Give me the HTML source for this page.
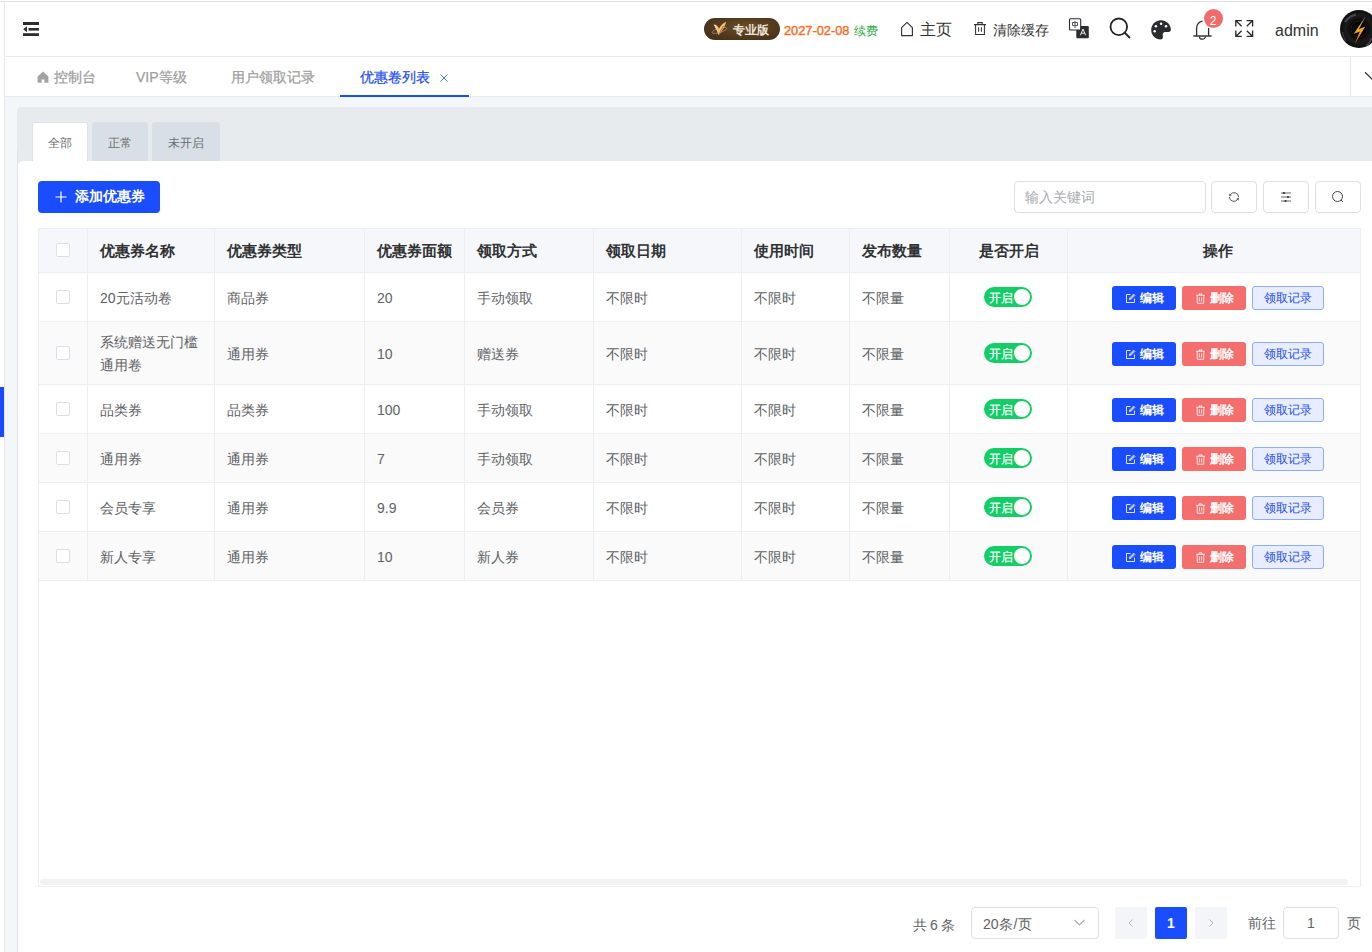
<!DOCTYPE html>
<html><head><meta charset="utf-8">
<style>
*{box-sizing:border-box;margin:0;padding:0}
html,body{width:1372px;height:952px;overflow:hidden;background:#fff;font-family:"Liberation Sans",sans-serif;color:#606266}
.abs{position:absolute}
#topline{left:0;top:1px;width:1372px;height:1px;background:#dfe3df}
#leftline{left:4px;top:2px;width:1px;height:950px;background:#e4e7ef}
#sidebar-ind{left:0;top:387px;width:4px;height:50px;background:#1a49ff}
#hdr-bottom{left:5px;top:56px;width:1367px;height:1px;background:#e6e9f0}
#tab-bottom{left:5px;top:96px;width:1367px;height:1px;background:#e6e9f0}
#content-bg{left:5px;top:97px;width:1367px;height:855px;background:#f4f7fa}
.t{position:absolute;white-space:nowrap;line-height:1}

.th{font-size:15px;font-weight:bold;color:#303133}
.td{font-size:14px;color:#606266}
.sw{width:48px;height:20px;border-radius:10px;background:#13ce66}
.sw span{position:absolute;left:4.5px;top:4.5px;font-size:12px;line-height:1;color:#fff;white-space:nowrap;-webkit-text-stroke:0.2px #fff}
.sw i{position:absolute;left:30px;top:2px;width:16px;height:16px;border-radius:50%;background:#fff}
.btn{height:24px;border-radius:3px;display:flex;align-items:center;justify-content:center;white-space:nowrap}
.btn b{font-size:12px;line-height:1;color:#fff;font-weight:bold;margin-left:4px;position:relative;top:-0.5px}
.be{background:#1a4dff}
.bd{background:#f46e6e}
.br{background:#e8eeff;border:1px solid #8faaff}
.br span{font-size:12px;line-height:1;color:#1f4cf2;font-weight:500;position:relative;top:-0.5px}
</style></head><body>
<div class="abs" id="topline"></div>
<div class="abs" id="leftline"></div>
<div class="abs" id="sidebar-ind"></div>
<div class="abs" id="hdr-bottom"></div>
<div class="abs" id="tab-bottom"></div>
<div class="abs" id="content-bg"></div>

<!-- header -->
<svg class="abs" style="left:23px;top:22px" width="17" height="15" viewBox="0 0 17 15">
<rect x="0" y="0" width="16" height="3" fill="#2c2d30"/>
<rect x="5.5" y="6" width="10.5" height="2.6" fill="#2c2d30"/>
<path d="M0.2 7.3 L4 4.3 L4 10.3 Z" fill="#2c2d30"/>
<rect x="0" y="11.2" width="16" height="2.8" fill="#2c2d30"/>
</svg>

<div class="abs" style="left:704px;top:18px;width:76px;height:22px;border-radius:11px;background:radial-gradient(ellipse at 55% 40%,#6a4c28 0%,#4f381d 60%,#3f2c16 100%)"></div>
<svg class="abs" style="left:711px;top:21px" width="17" height="16" viewBox="0 0 17 16">
<defs><linearGradient id="vlg" x1="0" y1="0" x2="1" y2="1"><stop offset="0" stop-color="#fff6e4"/><stop offset="0.45" stop-color="#f3c477"/><stop offset="1" stop-color="#e8a050"/></linearGradient></defs>
<ellipse cx="8.4" cy="9.4" rx="7.6" ry="2.2" transform="rotate(-17 8.4 9.4)" fill="none" stroke="#a39483" stroke-width="0.7"/>
<path d="M2.6 3.6 Q6.6 3.6 7.9 8.2 Q10.2 3 15.2 0.8 Q13.6 7.5 7.6 14.2 Q5.2 7.6 2.6 3.6 Z" fill="url(#vlg)"/>
<path d="M12.5 5 Q10 9 7.9 13.8" stroke="#b8452a" stroke-width="0.9" fill="none" opacity="0.8"/>
</svg>
<div class="t" style="left:732.5px;top:23.5px;font-size:12px;font-weight:bold;color:#eee6d8">专业版</div>
<div class="t" style="left:784px;top:25px;font-size:12.8px;color:#fa6a22;-webkit-text-stroke:0.4px #fa6a22">2027-02-08</div>
<div class="t" style="left:854px;top:24.5px;font-size:12px;color:#2aa745">续费</div>

<svg class="abs" style="left:900px;top:21px" width="15" height="16" viewBox="0 0 15 16">
<path d="M1.6 14.6 V6.6 L7 1.4 L12.4 6.6 V14.6 Z" fill="none" stroke="#333" stroke-width="1.15" stroke-linejoin="round"/>
</svg>
<div class="t" style="left:919.5px;top:22px;font-size:16px;color:#333">主页</div>
<svg class="abs" style="left:973px;top:21px" width="14" height="15" viewBox="0 0 14 15">
<path d="M1 3.6 H13 M4.8 3.4 V1.6 H9.2 V3.4 M2.6 3.8 V13.4 H11.4 V3.8 M5.6 6.2 V10.8 M8.4 6.2 V10.8" fill="none" stroke="#333" stroke-width="1.05"/>
</svg>
<div class="t" style="left:992.5px;top:23px;font-size:14px;color:#333">清除缓存</div>

<svg class="abs" style="left:1068px;top:17px" width="23" height="23" viewBox="0 0 23 23">
<rect x="8.3" y="9.1" width="12.5" height="12.2" rx="1" fill="#2b2c30"/>
<path d="M12.4 18.2 L15 12 L17.6 18.2 M13.4 16.2 H16.6" fill="none" stroke="#fff" stroke-width="0.9"/>
<rect x="1.5" y="1.8" width="11.2" height="11.2" rx="1" fill="#fff" stroke="#2b2c30" stroke-width="1.1"/>
<path d="M4.5 5.5 H9.5 V8.6 H4.5 Z M7 4 V11" fill="none" stroke="#444" stroke-width="0.9"/>
</svg>

<svg class="abs" style="left:1108px;top:16px" width="24" height="24" viewBox="0 0 24 24">
<circle cx="10.8" cy="10.8" r="8.3" fill="none" stroke="#222" stroke-width="1.8"/>
<path d="M17 17 L21.5 21.5" stroke="#222" stroke-width="1.8" stroke-linecap="round"/>
</svg>

<svg class="abs" style="left:1150px;top:19px" width="22" height="22" viewBox="0 0 22 22">
<path d="M11 1.2 C5.5 1.2 1.2 5.6 1.2 11 C1.2 16.2 5.4 20.4 10.6 20.4 C12.6 20.4 13.2 19 12.9 17.6 C12.6 16 12.6 14.6 13.4 13.8 C14.2 13 15.4 13 16.8 13 L18.5 13 C20 13 20.9 12 20.9 10.8 C20.9 5.6 16.5 1.2 11 1.2 Z" fill="#2b2c30"/>
<circle cx="5.9" cy="7.2" r="1.25" fill="#fff"/>
<circle cx="11.1" cy="4.7" r="1.25" fill="#fff"/>
<circle cx="16" cy="7.2" r="1.25" fill="#fff"/>
<circle cx="4.7" cy="12.2" r="1.25" fill="#fff"/>
</svg>

<svg class="abs" style="left:1191px;top:17px" width="24" height="24" viewBox="0 0 24 24">
<path d="M5.6 19 V11.5 C5.6 7.5 7.8 5 11.5 4.2 M17.6 11 V19" fill="none" stroke="#2b2c30" stroke-width="1.3"/>
<path d="M2.3 19 H20.6" stroke="#2b2c30" stroke-width="1.4"/>
<path d="M8.4 19.4 A3 2.8 0 0 0 14.4 19.4" fill="none" stroke="#2b2c30" stroke-width="1.2"/>
</svg>
<div class="abs" style="left:1203.5px;top:8.5px;width:19px;height:19px;border-radius:50%;background:#f26b6b;box-shadow:0 0 0 1px #fff"></div>
<div class="t" style="left:1203.5px;top:14.5px;width:19px;text-align:center;font-size:12px;color:#fff">2</div>

<svg class="abs" style="left:1234px;top:19px" width="20" height="19" viewBox="0 0 20 19">
<g fill="none" stroke="#2b2c30" stroke-width="1.35">
<path d="M1.8 7.5 V1.6 H7.8 M1.8 1.6 L7.6 7.3"/>
<path d="M12.6 1.6 H18.6 V7.5 M18.6 1.6 L12.8 7.3"/>
<path d="M1.8 11.5 V17.4 H7.8 M1.8 17.4 L7.6 11.7"/>
<path d="M12.6 17.4 H18.6 V11.5 M18.6 17.4 L12.8 11.7"/>
</g>
</svg>
<div class="t" style="left:1275px;top:22.5px;font-size:16px;color:#333">admin</div>

<svg class="abs" style="left:1339px;top:10px" width="40" height="39" viewBox="0 0 40 39">
<defs>
<radialGradient id="vg" cx="50%" cy="50%" r="50%"><stop offset="0" stop-color="#050505"/><stop offset="0.45" stop-color="#0a0a0a"/><stop offset="0.7" stop-color="#1c1c1e"/><stop offset="1" stop-color="#0d0d0d"/></radialGradient>
<linearGradient id="bolt" x1="0" y1="0" x2="0" y2="1"><stop offset="0" stop-color="#f7d23a"/><stop offset="0.5" stop-color="#f5a623"/><stop offset="1" stop-color="#e06a12"/></linearGradient>
</defs>
<circle cx="20" cy="19" r="19" fill="url(#vg)"/>
<path d="M6 12 Q10 6 17 4.5" stroke="#6a6d72" stroke-width="2.2" fill="none" opacity="0.55"/>
<path d="M33 28 Q31 33 27 36" stroke="#6a6d72" stroke-width="2" fill="none" opacity="0.5"/>
<path d="M3.5 22 Q4 27 7 31" stroke="#55585c" stroke-width="1.4" fill="none" opacity="0.5"/>
<circle cx="20" cy="19" r="8" fill="#030303" stroke="#2a2522" stroke-width="0.7"/>
<path d="M26.5 6.5 L14.6 24 L20.8 21.6 L15.8 34 L26.2 16.6 L19.8 19.2 Z" fill="url(#bolt)"/>
</svg>

<!-- tab bar -->
<svg class="abs" style="left:37px;top:71.3px" width="12" height="12" viewBox="0 0 12 12">
<path d="M6 0.8 L11.2 5.6 V11.5 H7.5 V8.3 H4.5 V11.5 H0.8 V5.6 Z" fill="#a3a3a3" stroke="#a3a3a3" stroke-width="0.4" stroke-linejoin="round"/>
</svg>
<div class="t" style="left:54px;top:70px;font-size:14px;color:#9e9e9e;-webkit-text-stroke:0.25px #9e9e9e">控制台</div>
<div class="t" style="left:136px;top:70px;font-size:14px;color:#9e9e9e;-webkit-text-stroke:0.25px #9e9e9e">VIP等级</div>
<div class="t" style="left:231px;top:70px;font-size:14px;color:#9e9e9e;-webkit-text-stroke:0.25px #9e9e9e">用户领取记录</div>
<div class="t" style="left:360px;top:70px;font-size:14px;color:#1f4ff5;-webkit-text-stroke:0.25px #1f4ff5">优惠卷列表</div>
<svg class="abs" style="left:439px;top:73px" width="10" height="10" viewBox="0 0 10 10">
<path d="M1.5 1.5 L8.5 8.5 M8.5 1.5 L1.5 8.5" stroke="#2456ff" stroke-width="0.85"/>
</svg>
<div class="abs" style="left:340px;top:95px;width:129px;height:2px;background:#1a4dff"></div>
<div class="abs" style="left:1350px;top:57px;width:1px;height:39px;background:#e6e9f0"></div>
<svg class="abs" style="left:1362px;top:68px" width="10" height="16" viewBox="0 0 10 16">
<path d="M3 4.2 L11 12.2" fill="none" stroke="#333" stroke-width="1.3"/>
</svg>

<!-- container -->
<div class="abs" style="left:17px;top:107px;width:1370px;height:860px;border-radius:4px;background:#e7ebee"></div>
<div class="abs" style="left:17px;top:150px;width:1px;height:802px;background:#e0e4ea"></div>
<div class="abs" style="left:18px;top:161px;width:1370px;height:800px;border-radius:5px 0 0 0;background:#fff"></div>
<div class="abs" style="left:32px;top:122px;width:56px;height:39px;background:#fff;border:1px solid #dde2e8;border-bottom:none;border-radius:3px 3px 0 0"></div>
<div class="abs" style="left:92px;top:122px;width:56px;height:39px;background:#d9dfe6;border-radius:3px 3px 0 0"></div>
<div class="abs" style="left:152px;top:122px;width:68px;height:39px;background:#d9dfe6;border-radius:3px 3px 0 0"></div>
<div class="t" style="left:48px;top:137px;font-size:12px;color:#6b6e73">全部</div>
<div class="t" style="left:108px;top:137px;font-size:12px;color:#6b6e73">正常</div>
<div class="t" style="left:168px;top:137px;font-size:12px;color:#6b6e73">未开启</div>

<!-- toolbar -->
<div class="abs" style="left:38px;top:181px;width:122px;height:32px;border-radius:4px;background:#1a4dff"></div>
<svg class="abs" style="left:55px;top:191px" width="12" height="12" viewBox="0 0 12 12">
<path d="M6 0.5 V11.5 M0.5 6 H11.5" stroke="#fff" stroke-width="1.2"/>
</svg>
<div class="t" style="left:74.5px;top:189px;font-size:14px;font-weight:bold;color:#fff">添加优惠券</div>

<div class="abs" style="left:1014px;top:181px;width:192px;height:32px;border-radius:4px;border:1px solid #dcdfe6;background:#fff"></div>
<div class="t" style="left:1025px;top:189.5px;font-size:14px;color:#a8abb2">输入关键词</div>
<div class="abs" style="left:1211px;top:181px;width:46px;height:32px;border-radius:4px;border:1px solid #dcdfe6;background:#fff"></div>
<div class="abs" style="left:1263px;top:181px;width:46px;height:32px;border-radius:4px;border:1px solid #dcdfe6;background:#fff"></div>
<div class="abs" style="left:1315px;top:181px;width:46px;height:32px;border-radius:4px;border:1px solid #dcdfe6;background:#fff"></div>
<svg class="abs" style="left:1228px;top:191px" width="12" height="12" viewBox="0 0 12 12">
<path d="M10.6 6.2 A4.5 4.5 0 0 0 2.4 3.6 M1.4 6 A4.5 4.5 0 0 0 9.6 8.4" fill="none" stroke="#555" stroke-width="1"/>
<path d="M1.1 5.2 L3.6 4.3 L1.6 2.6 Z" fill="#444"/>
<path d="M10.9 6.8 L8.4 7.7 L10.4 9.4 Z" fill="#444"/>
</svg>
<svg class="abs" style="left:1280px;top:191px" width="12" height="12" viewBox="0 0 12 12">
<path d="M1 2 H11 M1 6 H11 M1 10 H11" stroke="#666" stroke-width="1"/>
<circle cx="4" cy="2" r="1.1" fill="#333"/><circle cx="8" cy="6" r="1.1" fill="#333"/><circle cx="5.5" cy="10" r="1.1" fill="#333"/>
</svg>
<svg class="abs" style="left:1331px;top:190px" width="14" height="14" viewBox="0 0 14 14">
<circle cx="6.5" cy="6.5" r="5" fill="none" stroke="#444" stroke-width="1"/>
<path d="M10 10 L12 12" stroke="#444" stroke-width="1"/>
</svg>
<div class="abs" style="left:38px;top:228px;width:1323px;height:659px;border:1px solid #ebeef5;background:#fff"></div>
<div class="abs" style="left:39px;top:229px;width:1321px;height:43px;background:#f5f7fa"></div>
<div class="abs" style="left:39px;top:322px;width:1321px;height:62px;background:#fafafa"></div>
<div class="abs" style="left:39px;top:434px;width:1321px;height:48px;background:#fafafa"></div>
<div class="abs" style="left:39px;top:532px;width:1321px;height:48px;background:#fafafa"></div>
<div class="abs" style="left:39px;top:272px;width:1321px;height:1px;background:#ebeef5"></div>
<div class="abs" style="left:39px;top:321px;width:1321px;height:1px;background:#ebeef5"></div>
<div class="abs" style="left:39px;top:384px;width:1321px;height:1px;background:#ebeef5"></div>
<div class="abs" style="left:39px;top:433px;width:1321px;height:1px;background:#ebeef5"></div>
<div class="abs" style="left:39px;top:482px;width:1321px;height:1px;background:#ebeef5"></div>
<div class="abs" style="left:39px;top:531px;width:1321px;height:1px;background:#ebeef5"></div>
<div class="abs" style="left:39px;top:580px;width:1321px;height:1px;background:#ebeef5"></div>
<div class="abs" style="left:87px;top:229px;width:1px;height:351px;background:#ebeef5"></div>
<div class="abs" style="left:214px;top:229px;width:1px;height:351px;background:#ebeef5"></div>
<div class="abs" style="left:364px;top:229px;width:1px;height:351px;background:#ebeef5"></div>
<div class="abs" style="left:464px;top:229px;width:1px;height:351px;background:#ebeef5"></div>
<div class="abs" style="left:593px;top:229px;width:1px;height:351px;background:#ebeef5"></div>
<div class="abs" style="left:741px;top:229px;width:1px;height:351px;background:#ebeef5"></div>
<div class="abs" style="left:849px;top:229px;width:1px;height:351px;background:#ebeef5"></div>
<div class="abs" style="left:949px;top:229px;width:1px;height:351px;background:#ebeef5"></div>
<div class="abs" style="left:1067px;top:229px;width:1px;height:351px;background:#ebeef5"></div>
<div class="abs" style="left:40px;top:879px;width:1308px;height:6px;border-radius:3px;background:#f2f2f2"></div>
<div class="abs" style="left:56px;top:243px;width:14px;height:14px;border:1px solid #dcdfe6;border-radius:2px;background:#fff"></div>
<div class="abs" style="left:56px;top:290px;width:14px;height:14px;border:1px solid #dcdfe6;border-radius:2px;background:#fff"></div>
<div class="abs" style="left:56px;top:346px;width:14px;height:14px;border:1px solid #dcdfe6;border-radius:2px;background:#fff"></div>
<div class="abs" style="left:56px;top:402px;width:14px;height:14px;border:1px solid #dcdfe6;border-radius:2px;background:#fff"></div>
<div class="abs" style="left:56px;top:451px;width:14px;height:14px;border:1px solid #dcdfe6;border-radius:2px;background:#fff"></div>
<div class="abs" style="left:56px;top:500px;width:14px;height:14px;border:1px solid #dcdfe6;border-radius:2px;background:#fff"></div>
<div class="abs" style="left:56px;top:549px;width:14px;height:14px;border:1px solid #dcdfe6;border-radius:2px;background:#fff"></div>
<div class="t th" style="left:100px;top:243px">优惠券名称</div>
<div class="t th" style="left:227px;top:243px">优惠券类型</div>
<div class="t th" style="left:377px;top:243px">优惠券面额</div>
<div class="t th" style="left:477px;top:243px">领取方式</div>
<div class="t th" style="left:606px;top:243px">领取日期</div>
<div class="t th" style="left:754px;top:243px">使用时间</div>
<div class="t th" style="left:862px;top:243px">发布数量</div>
<div class="t th" style="left:950px;width:117px;text-align:center;top:243px">是否开启</div>
<div class="t th" style="left:1072px;width:292px;text-align:center;top:243px">操作</div>
<div class="t td" style="left:100px;top:290.5px">20元活动卷</div>
<div class="t td" style="left:227px;top:290.5px">商品券</div>
<div class="t td" style="left:377px;top:290.5px">20</div>
<div class="t td" style="left:477px;top:290.5px">手动领取</div>
<div class="t td" style="left:606px;top:290.5px">不限时</div>
<div class="t td" style="left:754px;top:290.5px">不限时</div>
<div class="t td" style="left:862px;top:290.5px">不限量</div>
<div class="abs sw" style="left:984px;top:287px"><span>开启</span><i></i></div>
<div class="abs btn be" style="left:1112px;top:286px;width:64px"><svg width="11" height="11" viewBox="0 0 11 11"><path d="M5.5 1.5 H1.5 V9.5 H9.5 V5.5" fill="none" stroke="#fff" stroke-width="1" opacity="0.85"/><path d="M4.5 6.5 L9 2 M4.5 6.5 V5.2 L8.6 1.1 L9.9 2.4 L5.8 6.5 Z" fill="none" stroke="#fff" stroke-width="0.9" opacity="0.85"/></svg><b>编辑</b></div>
<div class="abs btn bd" style="left:1182px;top:286px;width:64px"><svg width="11" height="11" viewBox="0 0 11 11"><path d="M1 2.3 H10 M4 2.2 V0.9 H7 V2.2 M2.2 2.6 V10.2 H8.8 V2.6 M4.3 4.3 V8.5 M6.7 4.3 V8.5" fill="none" stroke="#fff" stroke-width="0.9" opacity="0.9"/></svg><b>删除</b></div>
<div class="abs btn br" style="left:1252px;top:286px;width:72px"><span>领取记录</span></div>
<div class="t td" style="left:100px;top:331px;line-height:23px;white-space:normal">系统赠送无门槛<br>通用卷</div>
<div class="t td" style="left:227px;top:346.5px">通用券</div>
<div class="t td" style="left:377px;top:346.5px">10</div>
<div class="t td" style="left:477px;top:346.5px">赠送券</div>
<div class="t td" style="left:606px;top:346.5px">不限时</div>
<div class="t td" style="left:754px;top:346.5px">不限时</div>
<div class="t td" style="left:862px;top:346.5px">不限量</div>
<div class="abs sw" style="left:984px;top:343px"><span>开启</span><i></i></div>
<div class="abs btn be" style="left:1112px;top:342px;width:64px"><svg width="11" height="11" viewBox="0 0 11 11"><path d="M5.5 1.5 H1.5 V9.5 H9.5 V5.5" fill="none" stroke="#fff" stroke-width="1" opacity="0.85"/><path d="M4.5 6.5 L9 2 M4.5 6.5 V5.2 L8.6 1.1 L9.9 2.4 L5.8 6.5 Z" fill="none" stroke="#fff" stroke-width="0.9" opacity="0.85"/></svg><b>编辑</b></div>
<div class="abs btn bd" style="left:1182px;top:342px;width:64px"><svg width="11" height="11" viewBox="0 0 11 11"><path d="M1 2.3 H10 M4 2.2 V0.9 H7 V2.2 M2.2 2.6 V10.2 H8.8 V2.6 M4.3 4.3 V8.5 M6.7 4.3 V8.5" fill="none" stroke="#fff" stroke-width="0.9" opacity="0.9"/></svg><b>删除</b></div>
<div class="abs btn br" style="left:1252px;top:342px;width:72px"><span>领取记录</span></div>
<div class="t td" style="left:100px;top:402.5px">品类券</div>
<div class="t td" style="left:227px;top:402.5px">品类券</div>
<div class="t td" style="left:377px;top:402.5px">100</div>
<div class="t td" style="left:477px;top:402.5px">手动领取</div>
<div class="t td" style="left:606px;top:402.5px">不限时</div>
<div class="t td" style="left:754px;top:402.5px">不限时</div>
<div class="t td" style="left:862px;top:402.5px">不限量</div>
<div class="abs sw" style="left:984px;top:399px"><span>开启</span><i></i></div>
<div class="abs btn be" style="left:1112px;top:398px;width:64px"><svg width="11" height="11" viewBox="0 0 11 11"><path d="M5.5 1.5 H1.5 V9.5 H9.5 V5.5" fill="none" stroke="#fff" stroke-width="1" opacity="0.85"/><path d="M4.5 6.5 L9 2 M4.5 6.5 V5.2 L8.6 1.1 L9.9 2.4 L5.8 6.5 Z" fill="none" stroke="#fff" stroke-width="0.9" opacity="0.85"/></svg><b>编辑</b></div>
<div class="abs btn bd" style="left:1182px;top:398px;width:64px"><svg width="11" height="11" viewBox="0 0 11 11"><path d="M1 2.3 H10 M4 2.2 V0.9 H7 V2.2 M2.2 2.6 V10.2 H8.8 V2.6 M4.3 4.3 V8.5 M6.7 4.3 V8.5" fill="none" stroke="#fff" stroke-width="0.9" opacity="0.9"/></svg><b>删除</b></div>
<div class="abs btn br" style="left:1252px;top:398px;width:72px"><span>领取记录</span></div>
<div class="t td" style="left:100px;top:451.5px">通用券</div>
<div class="t td" style="left:227px;top:451.5px">通用券</div>
<div class="t td" style="left:377px;top:451.5px">7</div>
<div class="t td" style="left:477px;top:451.5px">手动领取</div>
<div class="t td" style="left:606px;top:451.5px">不限时</div>
<div class="t td" style="left:754px;top:451.5px">不限时</div>
<div class="t td" style="left:862px;top:451.5px">不限量</div>
<div class="abs sw" style="left:984px;top:448px"><span>开启</span><i></i></div>
<div class="abs btn be" style="left:1112px;top:447px;width:64px"><svg width="11" height="11" viewBox="0 0 11 11"><path d="M5.5 1.5 H1.5 V9.5 H9.5 V5.5" fill="none" stroke="#fff" stroke-width="1" opacity="0.85"/><path d="M4.5 6.5 L9 2 M4.5 6.5 V5.2 L8.6 1.1 L9.9 2.4 L5.8 6.5 Z" fill="none" stroke="#fff" stroke-width="0.9" opacity="0.85"/></svg><b>编辑</b></div>
<div class="abs btn bd" style="left:1182px;top:447px;width:64px"><svg width="11" height="11" viewBox="0 0 11 11"><path d="M1 2.3 H10 M4 2.2 V0.9 H7 V2.2 M2.2 2.6 V10.2 H8.8 V2.6 M4.3 4.3 V8.5 M6.7 4.3 V8.5" fill="none" stroke="#fff" stroke-width="0.9" opacity="0.9"/></svg><b>删除</b></div>
<div class="abs btn br" style="left:1252px;top:447px;width:72px"><span>领取记录</span></div>
<div class="t td" style="left:100px;top:500.5px">会员专享</div>
<div class="t td" style="left:227px;top:500.5px">通用券</div>
<div class="t td" style="left:377px;top:500.5px">9.9</div>
<div class="t td" style="left:477px;top:500.5px">会员券</div>
<div class="t td" style="left:606px;top:500.5px">不限时</div>
<div class="t td" style="left:754px;top:500.5px">不限时</div>
<div class="t td" style="left:862px;top:500.5px">不限量</div>
<div class="abs sw" style="left:984px;top:497px"><span>开启</span><i></i></div>
<div class="abs btn be" style="left:1112px;top:496px;width:64px"><svg width="11" height="11" viewBox="0 0 11 11"><path d="M5.5 1.5 H1.5 V9.5 H9.5 V5.5" fill="none" stroke="#fff" stroke-width="1" opacity="0.85"/><path d="M4.5 6.5 L9 2 M4.5 6.5 V5.2 L8.6 1.1 L9.9 2.4 L5.8 6.5 Z" fill="none" stroke="#fff" stroke-width="0.9" opacity="0.85"/></svg><b>编辑</b></div>
<div class="abs btn bd" style="left:1182px;top:496px;width:64px"><svg width="11" height="11" viewBox="0 0 11 11"><path d="M1 2.3 H10 M4 2.2 V0.9 H7 V2.2 M2.2 2.6 V10.2 H8.8 V2.6 M4.3 4.3 V8.5 M6.7 4.3 V8.5" fill="none" stroke="#fff" stroke-width="0.9" opacity="0.9"/></svg><b>删除</b></div>
<div class="abs btn br" style="left:1252px;top:496px;width:72px"><span>领取记录</span></div>
<div class="t td" style="left:100px;top:549.5px">新人专享</div>
<div class="t td" style="left:227px;top:549.5px">通用券</div>
<div class="t td" style="left:377px;top:549.5px">10</div>
<div class="t td" style="left:477px;top:549.5px">新人券</div>
<div class="t td" style="left:606px;top:549.5px">不限时</div>
<div class="t td" style="left:754px;top:549.5px">不限时</div>
<div class="t td" style="left:862px;top:549.5px">不限量</div>
<div class="abs sw" style="left:984px;top:546px"><span>开启</span><i></i></div>
<div class="abs btn be" style="left:1112px;top:545px;width:64px"><svg width="11" height="11" viewBox="0 0 11 11"><path d="M5.5 1.5 H1.5 V9.5 H9.5 V5.5" fill="none" stroke="#fff" stroke-width="1" opacity="0.85"/><path d="M4.5 6.5 L9 2 M4.5 6.5 V5.2 L8.6 1.1 L9.9 2.4 L5.8 6.5 Z" fill="none" stroke="#fff" stroke-width="0.9" opacity="0.85"/></svg><b>编辑</b></div>
<div class="abs btn bd" style="left:1182px;top:545px;width:64px"><svg width="11" height="11" viewBox="0 0 11 11"><path d="M1 2.3 H10 M4 2.2 V0.9 H7 V2.2 M2.2 2.6 V10.2 H8.8 V2.6 M4.3 4.3 V8.5 M6.7 4.3 V8.5" fill="none" stroke="#fff" stroke-width="0.9" opacity="0.9"/></svg><b>删除</b></div>
<div class="abs btn br" style="left:1252px;top:545px;width:72px"><span>领取记录</span></div>

<!-- pagination -->
<div class="t" style="left:913px;top:917.5px;font-size:14px;color:#606266;word-spacing:-1px">共 6 条</div>
<div class="abs" style="left:971px;top:907px;width:128px;height:32px;border:1px solid #dcdfe6;border-radius:4px;background:#fff"></div>
<div class="t" style="left:983px;top:916.5px;font-size:14px;color:#606266">20条<span style="margin:0 0.8px">/</span>页</div>
<svg class="abs" style="left:1073px;top:918px" width="13" height="9" viewBox="0 0 13 9">
<path d="M1.5 2 L6.5 7 L11.5 2" fill="none" stroke="#a8abb2" stroke-width="1.1"/>
</svg>
<div class="abs" style="left:1115px;top:907px;width:32px;height:32px;border-radius:2px;background:#f4f5f8"></div>
<svg class="abs" style="left:1126px;top:918px" width="10" height="10" viewBox="0 0 10 10">
<path d="M6.5 1.5 L3 5 L6.5 8.5" fill="none" stroke="#b5b8bf" stroke-width="1"/>
</svg>
<div class="abs" style="left:1155px;top:907px;width:32px;height:32px;border-radius:2px;background:#1a4dff"></div>
<div class="t" style="left:1155px;top:916px;width:32px;text-align:center;font-size:14px;font-weight:bold;color:#fff">1</div>
<div class="abs" style="left:1195px;top:907px;width:32px;height:32px;border-radius:2px;background:#f4f5f8"></div>
<svg class="abs" style="left:1206px;top:918px" width="10" height="10" viewBox="0 0 10 10">
<path d="M3.5 1.5 L7 5 L3.5 8.5" fill="none" stroke="#b5b8bf" stroke-width="1"/>
</svg>
<div class="t" style="left:1248px;top:916px;font-size:14px;color:#606266">前往</div>
<div class="abs" style="left:1283px;top:907px;width:56px;height:32px;border:1px solid #dcdfe6;border-radius:4px;background:#fff"></div>
<div class="t" style="left:1283px;top:916px;width:56px;text-align:center;font-size:14px;color:#606266">1</div>
<div class="t" style="left:1347px;top:916px;font-size:14px;color:#606266">页</div>
</body></html>
